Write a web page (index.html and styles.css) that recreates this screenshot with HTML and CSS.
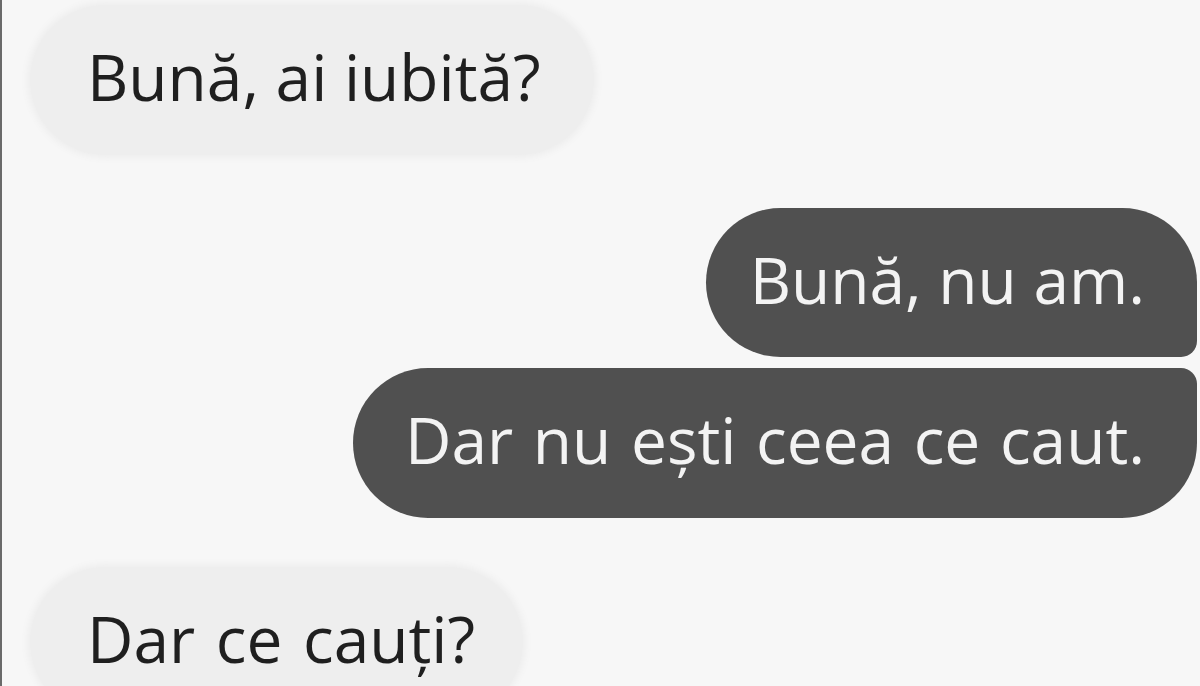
FILE: index.html
```html
<!DOCTYPE html>
<html lang="ro">
<head>
<meta charset="utf-8">
<link rel="stylesheet" href="styles.css">
</head>
<body>
<div class="chat">
  <div class="bubble in first">Bună, ai iubită?</div>
  <div class="bubble out top">Bună, nu am.</div>
  <div class="bubble out bottom">Dar nu ești ceea ce caut.</div>
  <div class="bubble in last">Dar ce cauți?</div>
</div>
</body>
</html>
```

FILE: styles.css
```css
html, body {
  margin: 0;
  padding: 0;
  height: 100%;
  overflow: hidden;
}
body {
  background: #f7f7f7;
  font-family: "Open Sans", "Noto Sans", sans-serif;
}
.chat {
  display: flex;
  flex-direction: column;
  border-left: 2px solid #6a6a6a;
  height: 100%;
  box-sizing: border-box;
}
.bubble {
  flex-shrink: 0;
  height: 150px;
  line-height: 144px;
  font-size: 64px;
  font-weight: 500;
  white-space: nowrap;
  box-sizing: border-box;
}
.in {
  align-self: flex-start;
  background: #eeeeee;
  color: #1f1f1f;
  border-radius: 75px;
  margin-left: 28px;
  padding: 0 53px 0 57px;
  box-shadow: 0 0 6px 3px #eeeeee;
}
.out {
  align-self: flex-end;
  background: #505050;
  color: #f3f3f3;
  margin-right: 3px;
  padding: 0 52px 0 44px;
}
.first {
  margin-top: 5px;
}
.top {
  margin-top: 53px;
  border-radius: 75px 75px 16px 75px;
  height: 149px;
}
.bottom {
  margin-top: 11px;
  border-radius: 75px 16px 75px 75px;
  padding-left: 52px;
  word-spacing: 3px;
}
.last {
  margin-top: 49px;
  padding-right: 48px;
  word-spacing: 4px;
}
```
